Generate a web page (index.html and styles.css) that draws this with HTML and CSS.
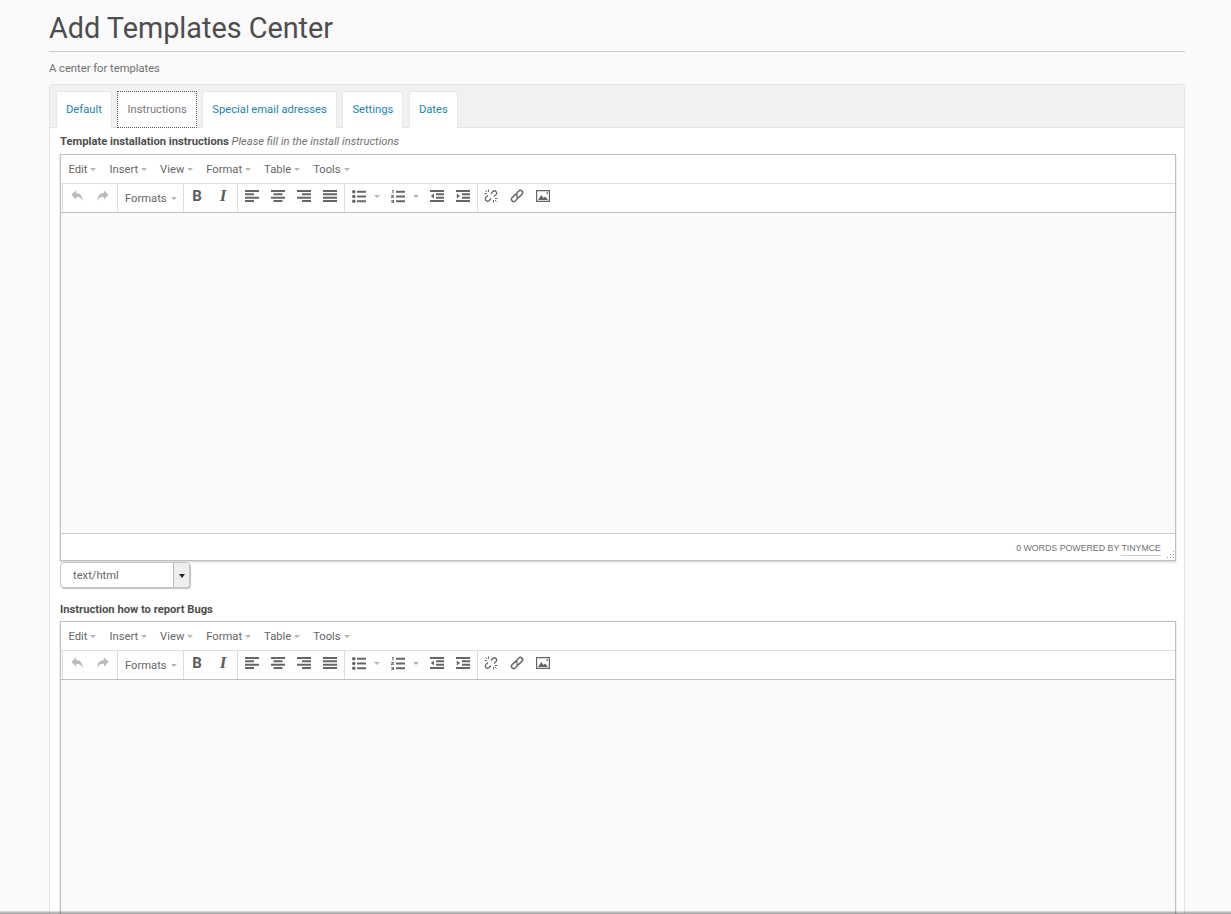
FILE: index.html
```html
<!DOCTYPE html>
<html lang="en">
<head>
    <meta charset="UTF-8">
    <title>Add Templates Center</title>
    <link rel="stylesheet" href="styles.css">
</head>
<body>

    <!-- shared toolbar icons -->
    <svg class="icon-defs" width="0" height="0">
        <symbol id="i-undo" viewBox="0 0 16 16"><path d="M1.5 6.5 7 1.5v3.2c4.5.2 7.6 3.3 7.5 9.300-1.200-3.500-3.500-5-7.500-5.100v3.300z"/></symbol>
        <symbol id="i-redo" viewBox="0 0 16 16"><path d="M14.500 6.500 9 1.500v3.200c-4.500.2-7.600 3.300-7.500 9.300 1.200-3.500 3.500-5 7.500-5.100v3.300z"/></symbol>
        <symbol id="i-left" viewBox="0 0 14 12"><path d="M0 0h14v2H0zM0 3.300h9v2H0zM0 6.700h14v2H0zM0 10h9v2H0z"/></symbol>
        <symbol id="i-center" viewBox="0 0 14 12"><path d="M0 0h14v2H0zM2.500 3.300h9v2h-9zM0 6.700h14v2H0zM2.500 10h9v2h-9z"/></symbol>
        <symbol id="i-right" viewBox="0 0 14 12"><path d="M0 0h14v2H0zM5 3.300h9v2H5zM0 6.700h14v2H0zM5 10h9v2H5z"/></symbol>
        <symbol id="i-justify" viewBox="0 0 14 12"><path d="M0 0h14v2H0zM0 3.300h14v2H0zM0 6.700h14v2H0zM0 10h14v2H0z"/></symbol>
        <symbol id="i-bullist" viewBox="0 0 14 13"><circle cx="1.800" cy="1.800" r="1.800"/><circle cx="1.800" cy="6.500" r="1.800"/><circle cx="1.800" cy="11.200" r="1.800"/><path d="M5 .8h9v2H5zM5 5.500h9v2H5zM5 10.200h9v2H5z"/></symbol>
        <symbol id="i-numlist" viewBox="0 0 14 13"><path d="M1 0h1.500v3.500H1.500V1H1zM0 5h3v1L1.200 7.200H3V8H0V7l1.800-1.200H0zM0 10h3v3H0v-.8h2v-.4H.8V11H2v-.2H0zM5 .8h9v2H5zM5 5.500h9v2H5zM5 10.200h9v2H5z"/></symbol>
        <symbol id="i-outdent" viewBox="0 0 14 12"><path d="M0 0h14v2H0zM6 3.300h8v2H6zM6 6.700h8v2H6zM0 10h14v2H0zM4 3.500v5L.8 6z"/></symbol>
        <symbol id="i-indent" viewBox="0 0 14 12"><path d="M0 0h14v2H0zM6 3.300h8v2H6zM6 6.700h8v2H6zM0 10h14v2H0zM.8 3.500v5L4 6z"/></symbol>
        <symbol id="i-unlink" viewBox="0 0 14 14"><path fill="none" stroke="currentColor" stroke-width="1.300" d="M7 4.500 9 2.200a2.300 2.300 0 0 1 3.200 3.200L10 7.500M7 9.500 5 11.800a2.300 2.300 0 0 1-3.200-3.200L4 6.500"/><path fill="none" stroke="currentColor" stroke-width="1" d="M4.500.5V3M.5 4.500H3M1.500 1.500 3 3M9.500 13.500V11M13.500 9.500H11M12.500 12.500 11 11"/></symbol>
        <symbol id="i-link" viewBox="0 0 14 14"><path fill="none" stroke="currentColor" stroke-width="1.500" d="M5.800 5.200 8.800 2.100a2.200 2.200 0 0 1 3.100 0 2.200 2.200 0 0 1 0 3.100L9.500 7.600a2.200 2.200 0 0 1-3.100 0M8.200 8.800 5.200 11.900a2.200 2.200 0 0 1-3.100 0 2.200 2.200 0 0 1 0-3.100L4.500 6.400a2.200 2.200 0 0 1 3.100 0"/></symbol>
        <symbol id="i-image" viewBox="0 0 14 12"><path fill-rule="evenodd" d="M0 0h14v12H0zM1.200 1.200v9.600h11.600V1.200z"/><path d="M2 10l3.300-5 2.200 3 1.700-1.500L12 10zM10.500 2.200h1.500v1.500h-1.500z"/></symbol>
    </svg>

    <div class="page">
        <h1 class="page-title">Add Templates Center</h1>
        <p class="page-sub">A center for templates</p>

        <div class="panel">
            <ul class="tabs">
                <li class="tab"><a href="#">Default</a></li>
                <li class="tab tab-active"><a href="#">Instructions</a></li>
                <li class="tab"><a href="#">Special email adresses</a></li>
                <li class="tab"><a href="#">Settings</a></li>
                <li class="tab"><a href="#">Dates</a></li>
            </ul>

            <div class="panel-body">
                <div class="field-label"><strong>Template installation instructions</strong> <em>Please fill in the install instructions</em></div>

                <div class="editor">
                    <div class="menubar">
                        <span class="menu">Edit<i class="caret"></i></span>
                        <span class="menu">Insert<i class="caret"></i></span>
                        <span class="menu">View<i class="caret"></i></span>
                        <span class="menu">Format<i class="caret"></i></span>
                        <span class="menu">Table<i class="caret"></i></span>
                        <span class="menu">Tools<i class="caret"></i></span>
                    </div>
                    <div class="toolbar">
                        <div class="group group-history">
                            <span class="btn muted"><svg width="14" height="14"><use href="#i-undo"/></svg></span>
                            <span class="btn muted"><svg width="14" height="14"><use href="#i-redo"/></svg></span>
                        </div>
                        <div class="group group-formats"><span class="menu formats">Formats<i class="caret"></i></span></div>
                        <div class="group group-style">
                            <span class="btn glyph-b">B</span>
                            <span class="btn glyph-i">I</span>
                        </div>
                        <div class="group">
                            <span class="btn"><svg width="14" height="12"><use href="#i-left"/></svg></span>
                            <span class="btn"><svg width="14" height="12"><use href="#i-center"/></svg></span>
                            <span class="btn"><svg width="14" height="12"><use href="#i-right"/></svg></span>
                            <span class="btn"><svg width="14" height="12"><use href="#i-justify"/></svg></span>
                        </div>
                        <div class="group">
                            <span class="btn btn-split"><svg width="14" height="13"><use href="#i-bullist"/></svg><i class="caret"></i></span>
                            <span class="btn btn-split"><svg width="14" height="13"><use href="#i-numlist"/></svg><i class="caret"></i></span>
                            <span class="btn"><svg width="14" height="12"><use href="#i-outdent"/></svg></span>
                            <span class="btn"><svg width="14" height="12"><use href="#i-indent"/></svg></span>
                        </div>
                        <div class="group group-last">
                            <span class="btn"><svg width="14" height="14"><use href="#i-unlink"/></svg></span>
                            <span class="btn"><svg width="14" height="14"><use href="#i-link"/></svg></span>
                            <span class="btn"><svg width="14" height="12"><use href="#i-image"/></svg></span>
                        </div>
                    </div>
                    <div class="edit-area"></div>
                    <div class="statusbar">
                        <span>0 WORDS POWERED BY <a href="#">TINYMCE</a></span>
                        <svg class="resize" width="10" height="10"><path d="M8 1h1v1H8zM5 4h1v1H5zM8 4h1v1H8zM2 7h1v1H2zM5 7h1v1H5zM8 7h1v1H8z"/></svg>
                    </div>
                </div>

                <div class="select">
                    <span class="select-value">text/html</span>
                    <span class="select-arrow"></span>
                </div>

                <div class="field-label field-label-second"><strong>Instruction how to report Bugs</strong></div>

                <div class="editor">
                    <div class="menubar">
                        <span class="menu">Edit<i class="caret"></i></span>
                        <span class="menu">Insert<i class="caret"></i></span>
                        <span class="menu">View<i class="caret"></i></span>
                        <span class="menu">Format<i class="caret"></i></span>
                        <span class="menu">Table<i class="caret"></i></span>
                        <span class="menu">Tools<i class="caret"></i></span>
                    </div>
                    <div class="toolbar">
                        <div class="group group-history">
                            <span class="btn muted"><svg width="14" height="14"><use href="#i-undo"/></svg></span>
                            <span class="btn muted"><svg width="14" height="14"><use href="#i-redo"/></svg></span>
                        </div>
                        <div class="group group-formats"><span class="menu formats">Formats<i class="caret"></i></span></div>
                        <div class="group group-style">
                            <span class="btn glyph-b">B</span>
                            <span class="btn glyph-i">I</span>
                        </div>
                        <div class="group">
                            <span class="btn"><svg width="14" height="12"><use href="#i-left"/></svg></span>
                            <span class="btn"><svg width="14" height="12"><use href="#i-center"/></svg></span>
                            <span class="btn"><svg width="14" height="12"><use href="#i-right"/></svg></span>
                            <span class="btn"><svg width="14" height="12"><use href="#i-justify"/></svg></span>
                        </div>
                        <div class="group">
                            <span class="btn btn-split"><svg width="14" height="13"><use href="#i-bullist"/></svg><i class="caret"></i></span>
                            <span class="btn btn-split"><svg width="14" height="13"><use href="#i-numlist"/></svg><i class="caret"></i></span>
                            <span class="btn"><svg width="14" height="12"><use href="#i-outdent"/></svg></span>
                            <span class="btn"><svg width="14" height="12"><use href="#i-indent"/></svg></span>
                        </div>
                        <div class="group group-last">
                            <span class="btn"><svg width="14" height="14"><use href="#i-unlink"/></svg></span>
                            <span class="btn"><svg width="14" height="14"><use href="#i-link"/></svg></span>
                            <span class="btn"><svg width="14" height="12"><use href="#i-image"/></svg></span>
                        </div>
                    </div>
                    <div class="edit-area"></div>
                </div>
            </div>
        </div>
    </div>

    <div class="bottom-shadow"></div>

</body>
</html>
```

FILE: styles.css
```css
html, body {
    height: 100%;
    overflow: hidden;
}

body {
    margin: 0;
    background-color: #fafafa;
    font-family: Roboto, Arial, sans-serif;
    font-size: 11.2px;
    color: #555;
}

.icon-defs {
    position: absolute;
}

.page {
    padding: 0 46px 0 49px;
}

.page-title {
    margin: 0;
    height: 51px;
    line-height: 57px;
    border-bottom: 1px solid #ccc;
    font-size: 28.8px;
    font-weight: 400;
    color: #4d4d4d;
}

.page-sub {
    margin: 0;
    height: 32px;
    line-height: 33px;
    color: #707070;
}

.panel {
    border: 1px solid #e4e4e4;
    border-radius: 3px 3px 0 0;
    background-color: #fff;
}

.tabs {
    display: flex;
    gap: 5.700px;
    margin: 0;
    padding: 6px 0 0 6px;
    height: 36px;
    list-style: none;
    background-color: #f1f1f1;
    border-bottom: 1px solid #e4e4e4;
}

.tab {
    height: 37px;
    box-sizing: border-box;
    padding: 0 9px;
    line-height: 36px;
    background-color: #fff;
    border: 1px solid #e8e8e8;
    border-bottom: none;
    border-radius: 3px 3px 0 0;
}

.tab a {
    color: #1c84b0;
    text-decoration: none;
}

.tab-active {
    border: 1px dotted #555;
    border-radius: 0;
}

.tab-active a {
    color: #777;
}

.panel-body {
    padding: 0 8px 0 10px;
}

.field-label {
    height: 26px;
    line-height: 27px;
    color: #707070;
}

.field-label strong {
    font-weight: 700;
    color: #4d4d4d;
}

.field-label-second {
    height: 33px;
    line-height: 44px;
}

.editor {
    border: 1px solid #bfbfbf;
    background-color: #fff;
    box-shadow: 0 1px 2px rgba(0, 0, 0, 0.2);
}

.menubar {
    display: flex;
    align-items: center;
    gap: 13px;
    height: 29px;
    box-sizing: border-box;
    padding: 2px 7.500px 0;
    border-bottom: 1px solid #e0e0e0;
}

.menu {
    font-size: 11.2px;
    line-height: 26px;
    color: #666;
    white-space: nowrap;
}

.caret {
    display: inline-block;
    margin-left: 3px;
    vertical-align: 2px;
    border-top: 3px solid #b5b5b5;
    border-left: 3px solid transparent;
    border-right: 3px solid transparent;
}

.toolbar {
    display: flex;
    height: 28px;
    padding-left: 1px;
    border-bottom: 1px solid #bfbfbf;
}

.group {
    display: flex;
    align-items: flex-start;
    padding: 0 1px;
    border-left: 1px solid #ddd;
}

.group-style {
    padding: 0 1px 0 0;
}

.group-last {
    padding-left: 0;
}

.group-history {
    width: 55px;
    box-sizing: border-box;
}

.group-formats {
    width: 66px;
    box-sizing: border-box;
    padding-top: 2px;
    padding-left: 7px;
    align-items: center;
}

.formats .caret {
    margin-left: 4px;
}

.btn {
    display: flex;
    align-items: center;
    justify-content: center;
    width: 26px;
    height: 24px;
    color: #666;
    fill: #666;
}

.btn.muted {
    color: #bbb;
    fill: #bbb;
}

.btn-split {
    width: 39px;
    justify-content: flex-start;
    padding-left: 6px;
    box-sizing: border-box;
}

.btn-split .caret {
    margin-left: 8px;
    vertical-align: 0;
}

.glyph-b {
    font-family: Roboto, Arial, sans-serif;
    font-size: 15px;
    font-weight: 700;
    color: #5c5c5c;
}

.glyph-i {
    font-family: "Liberation Serif", serif;
    font-size: 17px;
    font-weight: 700;
    font-style: italic;
    color: #5c5c5c;
}

.edit-area {
    height: 320px;
    background-color: #fafafa;
}

.statusbar {
    display: flex;
    justify-content: flex-end;
    align-items: center;
    position: relative;
    height: 27px;
    padding: 2px 14px 0 0;
    border-top: 1px solid #ccc;
    box-sizing: border-box;
    font-family: "Liberation Sans", Arial, sans-serif;
    font-size: 8.8px;
    color: #707070;
}

.statusbar a {
    color: #707070;
    text-decoration: none;
    padding-bottom: 2px;
    border-bottom: 1px solid #ccc;
}

.resize {
    position: absolute;
    right: 0;
    bottom: 0;
    fill: #aaa;
}

.select {
    display: flex;
    width: 130px;
    height: 26px;
    box-sizing: border-box;
    margin-top: 1px;
    border: 1px solid #c5c5c5;
    border-radius: 4px;
    background-color: #fff;
    box-shadow: 1px 1px 1px rgba(0, 0, 0, 0.25);
}

.select-value {
    flex: 1;
    padding-left: 12px;
    line-height: 26px;
    font-size: 11.2px;
    color: #666;
}

.select-arrow {
    position: relative;
    width: 15px;
    background-color: #eeeef0;
    border-left: 1px solid #bbb;
    border-radius: 0 3px 3px 0;
}

.select-arrow::after {
    content: "";
    position: absolute;
    top: 11px;
    left: 5px;
    border-top: 4px solid #222;
    border-left: 3px solid transparent;
    border-right: 3px solid transparent;
}

.bottom-shadow {
    position: fixed;
    left: 0;
    right: 0;
    bottom: 0;
    height: 3px;
    background: linear-gradient(to bottom, rgba(0, 0, 0, 0.08), rgba(0, 0, 0, 0.4));
}
```
